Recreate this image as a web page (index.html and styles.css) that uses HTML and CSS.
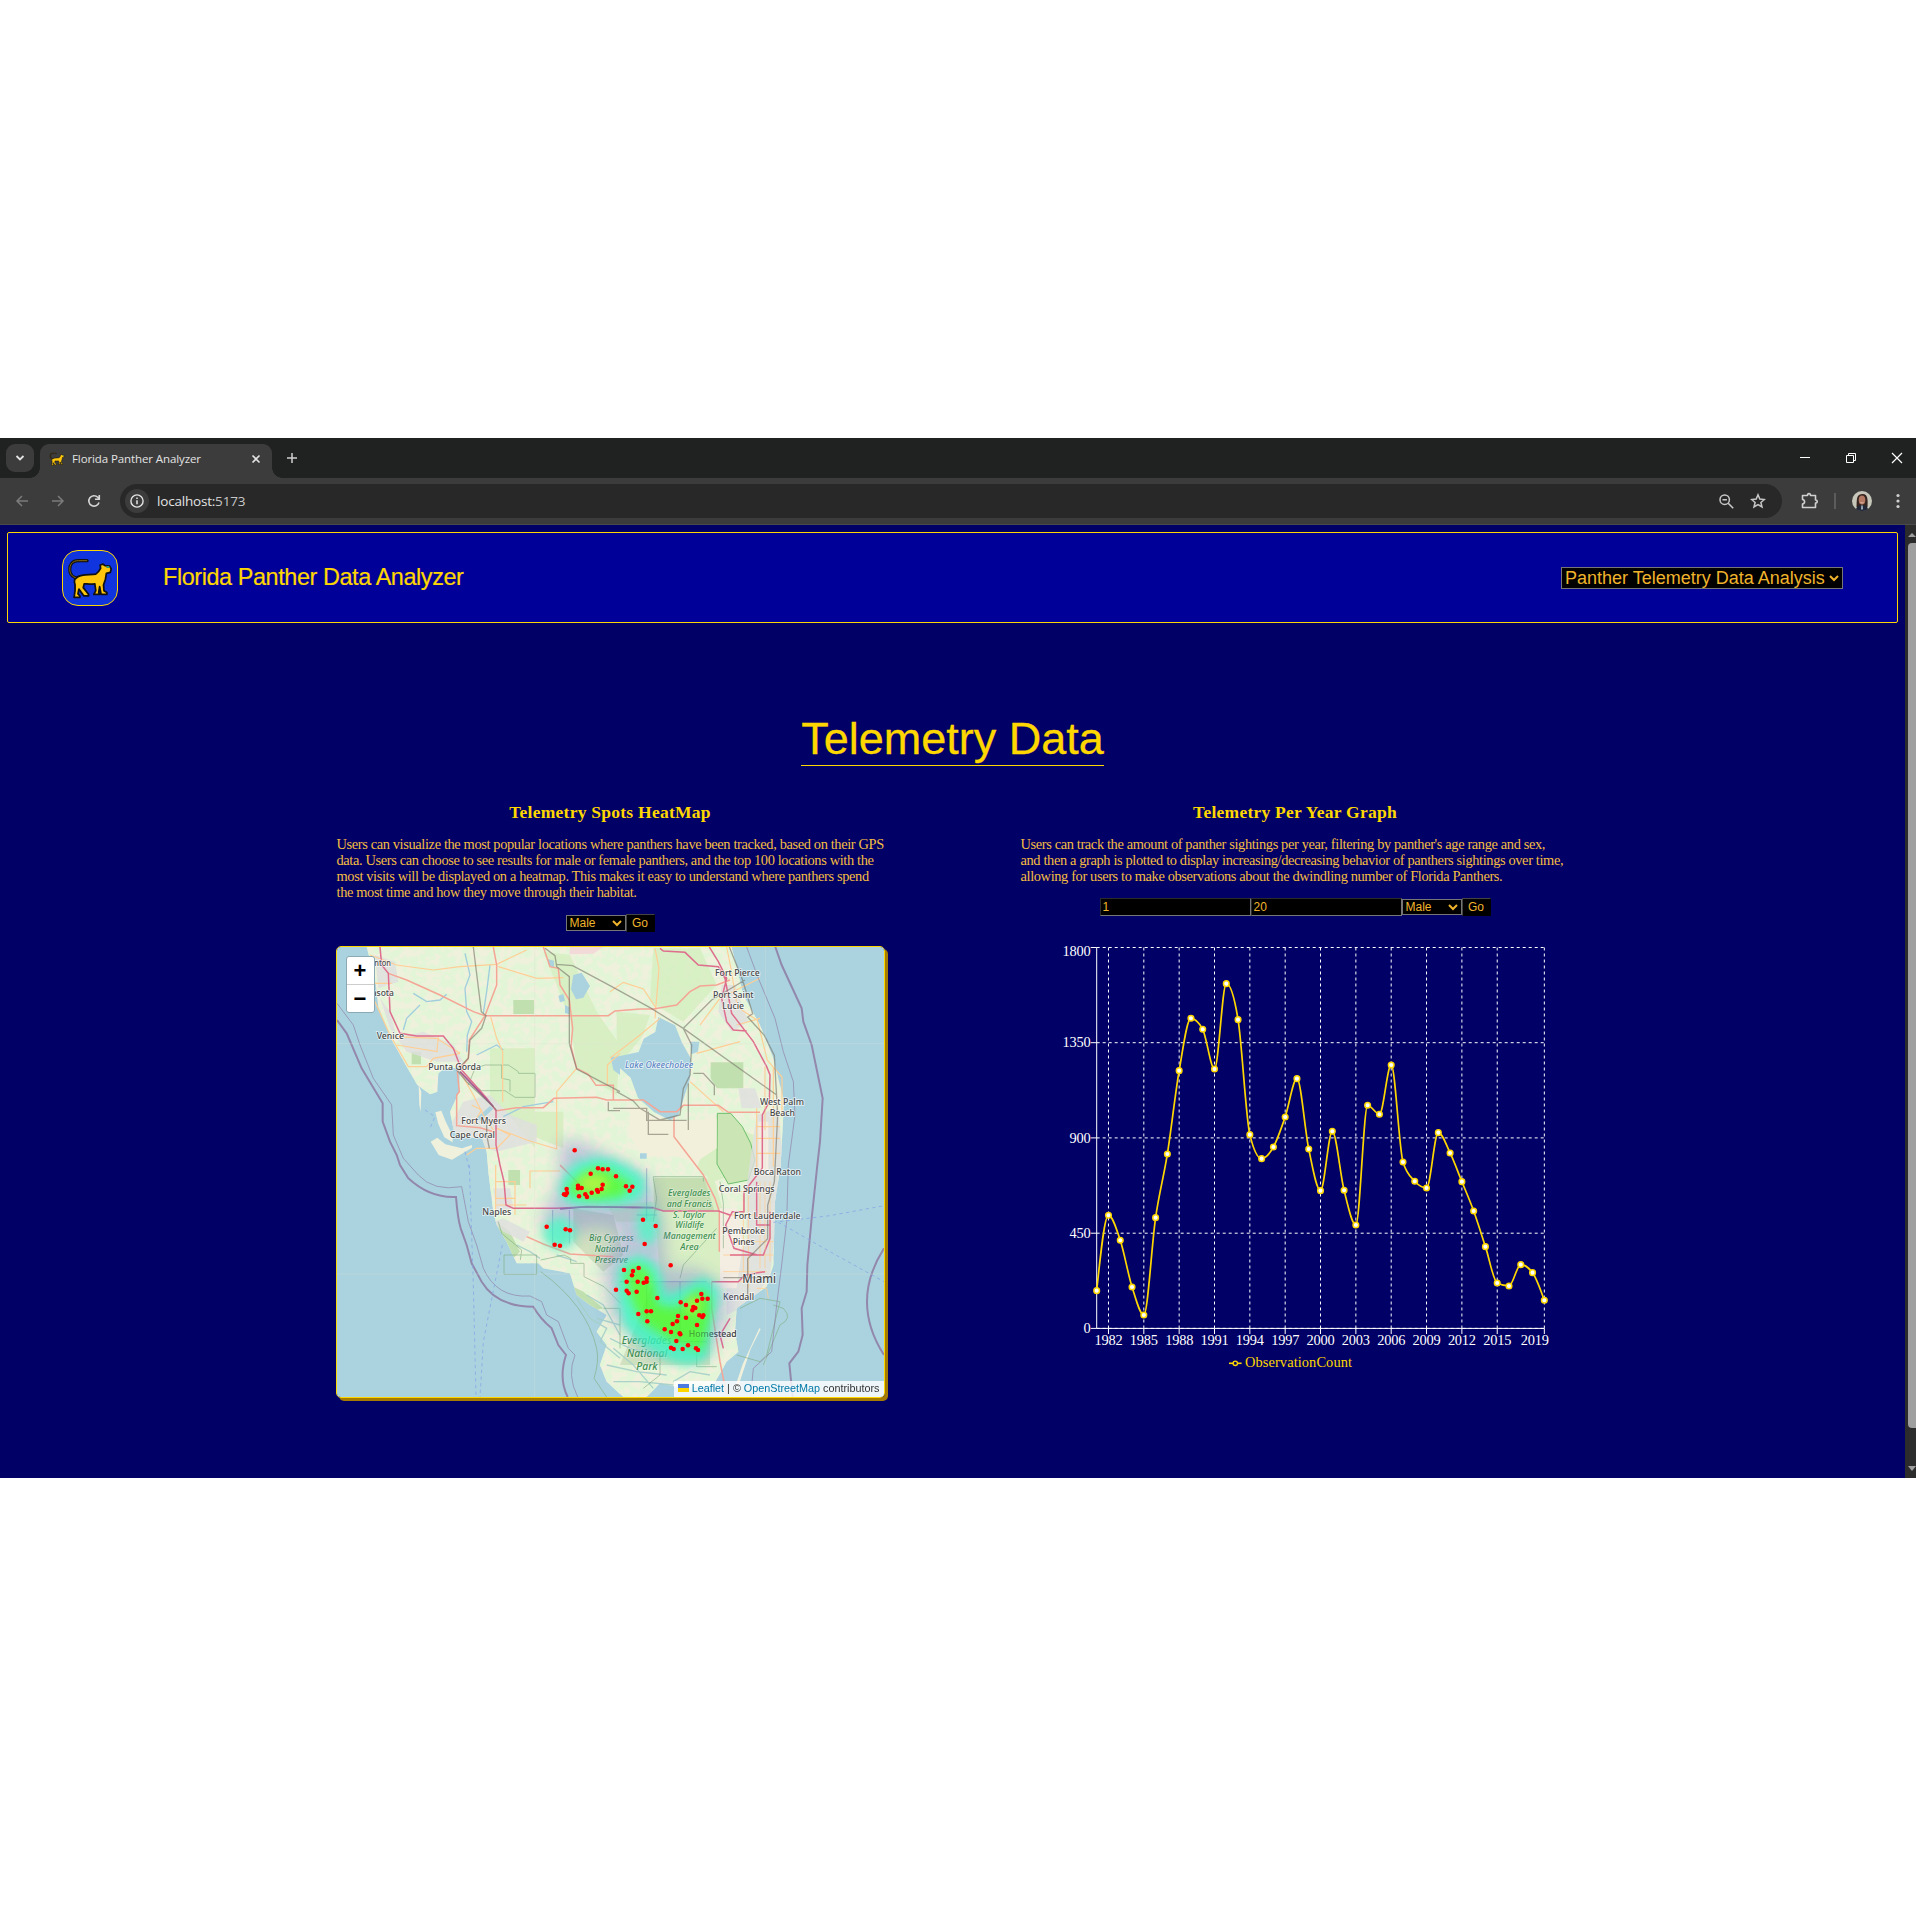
FILE: index.html
```html
<!DOCTYPE html>
<html lang="en">
<head>
<meta charset="utf-8">
<title>Florida Panther Analyzer</title>
<link rel="stylesheet" href="styles.css">
</head>
<body>
<svg class="defs" width="0" height="0">
  <symbol id="panther" viewBox="0 0 56 56">
    <path d="M25 10H16C9 10 7 15 7 19c0 6 4 9 9 9" fill="none" stroke="#111" stroke-width="3.200" stroke-linecap="round"/>
    <path d="M25 10H16C9 10 7 15 7 19c0 6 4 9 9 9" fill="none" stroke="#8a6b10" stroke-width="1"/>
    <path d="M15 27c4-3 13-2 19-3 3-2 4-4 5-6l-.5-3.500 3-.8 2 1.500 5 .5 1.500 3-1 3.500-4 1-1 6-2 6 .5 6 3 1.800v2h-6l-1.500-8-1 6 1 2h-6l2-4-1-7c-4 1-8 0-11 0l-1 4 4 5 1.500 2v1.500h-5l-5-7-1 5 2 2v1.500h-6l1-7 0-6c-1-3-1-6 1.500-7z" fill="#ffc60b" stroke="#111" stroke-width="1.800" stroke-linejoin="round"/>
    <path d="M45 16.500h3" stroke="#2b9a7a" stroke-width="2"/>
  </symbol>
  <symbol id="chevron" viewBox="0 0 10 8"><path d="M1 2l4 4 4-4" fill="none" stroke="currentColor" stroke-width="2"/></symbol>
</svg>

<div class="window">
  <div class="tabstrip">
    <div class="tab-search"><svg width="10" height="8"><path d="M1.500 2l3.500 3.500L8.500 2" fill="none" stroke="#e3e3e3" stroke-width="1.800"/></svg></div>
    <div class="tab">
      <svg class="favicon" width="18" height="18"><use href="#panther"/></svg>
      <span class="tab-title">Florida Panther Analyzer</span>
      <svg class="tab-close" width="10" height="10"><path d="M1.500 1.500l7 7M8.500 1.500l-7 7" stroke="#e3e3e3" stroke-width="1.600"/></svg>
    </div>
    <svg class="new-tab" width="12" height="12"><path d="M6 1v10M1 6h10" stroke="#d0d0d0" stroke-width="1.500"/></svg>
    <div class="caption">
      <svg width="12" height="12"><path d="M1 5.500h10" stroke="#fff"/></svg>
      <svg width="12" height="12"><path d="M1.500 3.500h7v7h-7zM3.500 3V1.500h7v7H9" fill="none" stroke="#fff"/></svg>
      <svg width="12" height="12"><path d="M1 1l10 10M11 1L1 11" stroke="#fff" stroke-width="1.200"/></svg>
    </div>
  </div>
  <div class="toolbar">
    <svg class="nav-icon" width="14" height="14"><path d="M13 7H2M7 2L2 7l5 5" fill="none" stroke="#7b7b7b" stroke-width="1.500"/></svg>
    <svg class="nav-icon" width="14" height="14"><path d="M1 7h11M7 2l5 5-5 5" fill="none" stroke="#7b7b7b" stroke-width="1.500"/></svg>
    <svg class="nav-icon" width="14" height="14"><path d="M12 8.500A5.200 5.200 0 1 1 10.800 3.300L12 4.500M12.300 1v4.200H8" fill="none" stroke="#d6d6d6" stroke-width="1.600"/></svg>
    <div class="omnibox">
      <div class="site-info"><svg width="14" height="14"><circle cx="7" cy="7" r="6.100" fill="none" stroke="#e3e3e3" stroke-width="1.400"/><path d="M7 6.200v4M7 3.600v1.500" stroke="#e3e3e3" stroke-width="1.500"/></svg></div>
      <span class="url"><span class="host">localhost:</span>5173</span>
      <svg class="find" width="15" height="15"><circle cx="5.700" cy="5.700" r="4.700" fill="none" stroke="#c7c7c7" stroke-width="1.500"/><path d="M3.500 5.700h4.400M9.200 9.200l5 5" stroke="#c7c7c7" stroke-width="1.600"/></svg>
      <svg class="star" width="16" height="16"><path d="M8 1.800l1.800 4.300 4.600.4-3.500 3 1.100 4.500-4-2.400-4 2.400 1.100-4.500-3.500-3 4.600-.4z" fill="none" stroke="#c7c7c7" stroke-width="1.500"/></svg>
    </div>
    <svg class="puzzle" width="18" height="18"><path d="M2.500 3.500H7.500C7.500 1 10.500 1 10.500 3.500H15.500V8C17.800 8 17.800 11 15.500 11V15.500H2.500V12C5.300 11.500 5.300 8 2.500 7.500z" fill="none" stroke="#d0d0d0" stroke-width="1.600" stroke-linejoin="round"/></svg>
    <i class="sep"></i>
    <svg class="avatar" width="20" height="20"><circle cx="10" cy="10" r="10" fill="#c6c6ba"/><path d="M4.500 16C5 9 4 3.500 10 3s6 6 5.500 13z" fill="#35241f"/><ellipse cx="10" cy="9" rx="3.300" ry="4.500" fill="#b57862"/><path d="M8.500 11.500q1.500 1 3 0" stroke="#e8d8d0" fill="none" stroke-width=".7"/><path d="M4 18c1-3 3-4 6-4s5 1 6 4c-3 2.700-9 2.700-12 0z" fill="#222838"/><path d="M9.200 14.500h1.600l.2 4h-2z" fill="#9ab"/></svg>
    <svg class="menu" width="4" height="16" fill="#d0d0d0"><circle cx="2" cy="2.500" r="1.600"/><circle cx="2" cy="8" r="1.600"/><circle cx="2" cy="13.500" r="1.600"/></svg>
  </div>

  <div class="viewport">
    <main class="page">
      <nav class="navbar">
        <div class="logo"><svg width="54" height="54"><use href="#panther"/></svg></div>
        <span class="brand">Florida Panther Data Analyzer</span>
        <div class="select select-nav"><span>Panther Telemetry Data Analysis</span><svg width="10" height="8"><use href="#chevron"/></svg></div>
      </nav>
      <h1>Telemetry Data</h1>
      <div class="columns">
        <section class="column">
          <h3>Telemetry Spots HeatMap</h3>
          <p>Users can visualize the most popular locations where panthers have been tracked, based on their GPS<br>data. Users can choose to see results for male or female panthers, and the top 100 locations with the<br>most visits will be displayed on a heatmap. This makes it easy to understand where panthers spend<br>the most time and how they move through their habitat.</p>
          <div class="controls">
            <div class="select"><span>Male</span><svg width="10" height="8"><use href="#chevron"/></svg></div>
            <button>Go</button>
          </div>
          <div class="map">
<svg class="tiles" viewBox="21 36 1641 1350">
  <defs>
    <filter id="mottle" x="0" y="0" width="100%" height="100%"><feTurbulence type="fractalNoise" baseFrequency=".045" numOctaves="4" seed="8"/><feColorMatrix values="0 0 0 0 .77  0 0 0 0 .91  0 0 0 0 .68  6 0 0 0 -2.300"/></filter>
    <filter id="b12" x="-50%" y="-50%" width="200%" height="200%"><feGaussianBlur stdDeviation="14"/></filter>
    <filter id="b20" x="-50%" y="-50%" width="200%" height="200%"><feGaussianBlur stdDeviation="24"/></filter>
    <clipPath id="land"><path id="coast" d="M110 36L135 130 145 215 185 315 232 398 262 450 300 478 322 470 325 415 345 398 390 400 388 470 360 530 372 590 400 610 455 605 470 650 475 710 490 830 500 870 530 920 560 985 625 985 640 1000 720 1015 740 1080 780 1110 830 1140 800 1190 830 1230 810 1290 830 1340 880 1386 950 1386 990 1345 1060 1360 1150 1350 1190 1280 1225 1250 1215 1190 1220 1120 1310 1055 1330 990 1335 800 1352 690 1362 500 1330 370 1290 270 1240 180 1205 36Z"/></clipPath>
  </defs>
  <rect x="21" y="36" width="1641" height="1350" fill="#aad3df"/>
  <use href="#coast" fill="#f0f1dc"/>
  <g clip-path="url(#land)">
    <rect x="100" y="36" width="1280" height="1350" filter="url(#mottle)"/>
    <g fill="#d3edbd" opacity=".75"><path d="M480 340H615V640L520 520 480 500ZM640 50L720 60 800 230 870 330 860 480 740 400 720 250ZM600 530H700V640L600 600ZM970 40H1110L1160 150 1060 260 960 200ZM860 230L960 240 940 300 860 400ZM1160 550L1270 600 1270 700 1150 740 1100 700ZM860 860H1180L1170 830 1150 740 970 730 970 800 830 810Z"/><path d="M1130 650L1180 830 1170 1040 990 1040 970 730H1150"/></g>
    <g fill="#b6dba5" opacity=".8"><path d="M550 195h62v42h-62zM245 350h28v38h-28zM535 705h35v45h-35zM1142 382h98v78h-80l-18-30zM700 1040l60 30 60 50-40 10-60-50zM500 860l40 30 30 60-20 20-30-40z"/></g>
    <path d="M1162 535h40l35 40 25 50 13 50-20 60-60 12-34-60z" fill="#cbe6b4" stroke="#6cbf6c" stroke-width="3"/>
    <path d="M973 728h150l30 100h-180z" fill="#bcd5aa" opacity=".7"/>
    <path d="M900 515h50l10 25 70 20 130-10v90l-60 40-60-15H940l-40-60z" fill="#f2f0da"/>
    <path d="M720 36h100l-30 20-72 2z" fill="#f2dad9"/>
    <g fill="#dedfde" opacity=".8"><path d="M135 60l60 20 10 60-60 20zM150 190l30 40 20 80-20-30zM200 310l80-20 90 40 30 50-80 0-90-30zM400 500l80-20 60 60 80 30 0 50-120 30-60-20-40 30-60-50zM490 760l50 0 10 60-50 10zM490 860l30-10 80 40-20 30-60-30zM1175 150l40 0 40 110-50 30-40-60zM1225 460l50 0 20 60-60 0zM1280 540l65-20 15 180-40 320-50 80-80 40 0-120 60-100 0-170z"/></g>
    <g fill="#f4ede2"><path d="M1170 820h50l20 100-20 140-50 0zM1285 560h30v160h-30z"/></g>
    <g fill="#c4d9b4" opacity=".7"><path d="M970 1040h170v250H870l40-100z"/><path d="M730 820l120 20 30 120-60 50-90-90z"/></g>
  </g>
  <g fill="#aad3df"><path d="M985 246l50 25 20 50 28 50-3 60-35 110-25 15-48-25-48-43-22-60-56-50 10-12 70-15 15-40 35-20z"/><path d="M730 120l25-7 25 40-20 35-22 5-15-30zM685 182l15-5 5 20-15 5zM652 72l20 5v20l-15-4zM705 210l15 8-3 20-12-4zM842 365l28 0v55l-20-15zM1080 320l28 0-4 30-20 8zM930 655h20v16h-20zM440 548l40-35 10 8-38 36z"/></g>
  <g fill="#f0f1dc"><path d="M316 532l18-5 14 35 20 40 0 20-25-15-18-40zM302 620l20-12 24 20 50 12 30-10 0 8-60 36-40-14zM266 450l8 20-2 60-4-20zM1288 1180l4 2-30 60-30 90-6 20-8-4 20-60z"/></g>
  <g fill="none" stroke="#a5cfc8" stroke-width="4" opacity=".9"><path d="M740 1090l40 60 50 30-20 40 60 50M800 1150l70 20M840 1210l60 30 80 20M830 1290l90 20 90 10M850 1340l80 0 100 10M1030 1340l50-30 60 10M770 1080l50 30 50 90M850 1240l60 50 60 70M560 930l40 20 30 20M680 960l60 20"/></g>
  <g fill="none" stroke="#9fcddd" stroke-width="4"><path d="M250 175L290 200 330 195 350 178M220 285L230 250 270 210M405 55L420 120 405 160 410 230 425 260 412 300 410 350M480 90L470 170 460 235M440 360L500 330 520 345M520 545l60-30 90-15"/></g>
  <g fill="none" stroke="#7eab7e" stroke-width="3" opacity=".6"><path d="M415 450l20-50 30-10h50v40l25 5v35M515 390h20l30 20v5h50v72h-60l-30-20h-70l-20-15M522 960h98v58h-98zM632 975l70-15 20 10 0 15h40v40l60 30 50 50M505 860l10 35 60 50-4 30M970 860l10-70-10-60v-5h150v15M1170 740l10 65v135M1050 1030l10-40 100-110M820 1120h50v120M1100 1230v65h60M990 1260v60l-50 40"/><path d="M632 1010Q770 1110 800 1240Q808 1280 792 1330L830 1386M1230 1120l60-30 60 10-40 160-20 20-70-20M1330 1110l30 10q30 30-10 50l-50 120"/></g>
  <g fill="none" stroke="#ffce94" stroke-width="3.500"><path d="M120 60L200 90 310 105 390 95 500 88 590 45M135 145h50M135 200L180 300 235 395 290 395 310 370 390 355M190 305l130 5 70 45M325 305l-4 45-120-20M482 245L500 310 518 350V500M505 95L620 130 700 128M832 450V390L870 355M390 410L430 480 460 540 500 600M425 510l30 15-25 40M500 580L590 615 680 642V470L740 400M500 580l40 20-40 40-60 0-30 20M495 740h60v100M495 790h60M500 810h90M497 690v150M600 760v-52h90M1110 270l60-80 120-60M975 40l12 60-12 150M840 170l40-28 60 20 40 60M840 370l90-70 60-50M1220 270l70-20M1190 36l12 60 20 120 60 40 30 120 44 50 0 120M1080 440l100 90M1280 520v180M1305 395v190M1330 395v300M1280 575h70M1280 610h70M1280 655h70M1100 355l130-35"/><path d="M1240 780v230M1255 780v280M1290 740v260M1320 740v240M1305 740v260M1220 770h110M1190 840h140M1200 920h130M1180 960h150M1180 1010h130M1190 1040h90M1280 1060l30 0 5 30" stroke-width="2.500"/></g>
  <g fill="none" stroke="#f5a595" stroke-width="4.500"><path d="M175 115L230 135 330 180 430 230 465 242H835L855 228 930 222H970L1040 210 1080 170 1110 153 1160 150 1200 135M490 36L500 90V150L465 242 418 315 415 370 382 412 388 470 380 480V572L450 578 490 590M500 527L560 518H640L672 490 800 487 830 495H940L990 530H1040L1060 511H1165L1195 532H1290M640 36L660 95 685 100 690 150 718 195 728 280 723 335 740 400 775 418 798 451H850V495M1032 545v60L1120 720 1155 790 1168 830V950M690 690l70 70M590 905l50 22 80 30 130 8M1145 1040v80l25 160 20 100"/></g>
  <g fill="none" stroke="#df6d8d" stroke-width="4.500"><path d="M150 36L155 90 175 115 180 230 210 295 260 303H340L370 340 395 405 470 490 498 527 498 630 510 690M510 690L522 740 528 810 550 820H680L770 815 850 817 970 818 1000 828 1165 828 1200 840M990 40L1000 48 1065 52 1105 90 1165 95 1185 130 1205 235 1270 320 1310 395 1320 420 1318 500 1297 540V700M1138 36L1165 80 1190 130 1175 190 1190 260 1210 285 1250 288M1297 700l-55 70 0 60-35 0-20 40 25 70 70 20M1280 740v130h40M1200 960h100l20-50v-80M1145 1040h80l20-20 60-10M1200 1150l-30 50 10 40"/></g>
  <path d="M390 410L490 515M690 822L770 815 970 818" fill="none" stroke="#a65a90" stroke-width="5"/>
  <g fill="none" stroke="#777368" stroke-width="4" opacity=".6"><path d="M430 36L454 230 468 242 455 280 420 315 415 370 380 405 410 440 495 520 500 527M645 40L675 62 680 95 718 125V325L740 402 870 470M680 88L728 92 840 152 960 218 1060 280 1340 480M1060 280l85-85 100-60M1060 280L1085 330 1080 420 1060 460 1050 540 990 555 930 520 910 498 860 470M835 500v27h35M850 520h100v36h80l40 0M955 530v68h60M1090 415h30l33 36v30M1075 445v140M1198 36l40 100 30 100-15 10 50 55 30 60 10 180-10 200-20 70v100l-60 60v120M470 560v40l8 40M1180 1028h130"/></g>
  <g fill="none" stroke="#6977ad" stroke-width="3" opacity=".5"><path d="M668 825v110M718 825v100M950 700v150M980 840h-60M870 1040h260M1050 1040v180l80 0M950 1040v120"/></g>
  <g fill="none" stroke="#8f7ba4" opacity=".85" stroke-width="6"><path d="M21 255L50 295 95 400 158 505 158 560 180 620 200 660 210 690 235 730Q300 790 378 786Q383 850 392 880L410 930 425 985 455 1040Q500 1115 610 1115 630 1150 665 1180L685 1230 708 1260Q685 1330 713 1386M1336 36L1355 90 1415 220 1420 260 1445 330 1478 490 1470 620 1462 690 1445 850 1432 990 1430 1070 1415 1120 1418 1200 1405 1250 1378 1285 1388 1386M1662 940Q1560 1100 1662 1260"/><path d="M21 205L70 270 90 330 130 430 185 510 190 600 220 670 265 720Q310 770 395 755L415 860 440 930 460 1000Q500 1090 600 1083L635 1100 650 1140 685 1160 715 1240 735 1260Q710 1320 743 1386M1250 36L1285 130 1335 250 1360 350 1390 440 1395 540 1375 690 1370 860 1355 990 1340 1110 1325 1250 1270 1300 1262 1386" stroke-width="3" opacity=".75"/></g>
  <path d="M418 690L430 1050 438 1386M517 930L460 1220 450 1386M285 525l30 20-15 35M405 650l15 60M1330 862L1500 842 1662 812M1345 862L1500 950 1662 1040" fill="none" stroke="#86a5e5" stroke-width="3" stroke-dasharray="10 10" opacity=".75"/>
  <path d="M21 326H1662M21 1017H1662M614 36V1386M1306 36V1386" stroke="#e0e0d8" stroke-width="2" opacity=".45"/>
  <g id="labels" class="map-labels"></g>
  <g class="heat">
    <path d="M690 620l60 0 100 50 110 60 40 130 10 140 90 0 90 60 0 100-60 110-160-10-130-120-20-160 50-90-90-10-90 40-60-60 60-120z" fill="#7076d8" opacity=".42" filter="url(#b20)"/>
    <g fill="#38f5c2" filter="url(#b12)" opacity=".95"><path d="M690 785Q690 680 790 668 860 660 940 725 965 805 870 810L730 812z"/><ellipse cx="688" cy="895" rx="48" ry="48" opacity=".9"/><ellipse cx="952" cy="870" rx="32" ry="60" opacity=".85"/><path d="M865 1000q70-80 125 10l20 70 110-55q70 30 35 100-15 60-20 140-60 50-150-5-75-40-105-95-25-80-15-155z"/></g>
    <g fill="#48fb28" filter="url(#b12)" opacity=".95"><path d="M710 775Q755 690 825 700L905 745 875 785 790 793z"/><path d="M888 1010q45-40 75 10l20 90 60 10 60-55q50 5 35 75l-20 105-90-25-85-55q-50-70-55-155z"/></g>
    <g fill="#b4f52a" filter="url(#b12)" opacity=".8"><ellipse cx="790" cy="745" rx="46" ry="28"/><ellipse cx="1090" cy="1110" rx="22" ry="28"/></g>
  </g>
  <g id="labels-over" class="map-labels" opacity=".35"></g>
  <g id="spots" fill="#f00"></g>
</svg>
            <div class="zoom"><span>+</span><span>−</span></div>
            <div class="attribution"><svg width="11" height="8"><path fill="#4c7be1" d="M0 0h11v4H0z"/><path fill="#ffd500" d="M0 4h11v4H0z"/></svg> <a>Leaflet</a> | © <a>OpenStreetMap</a> contributors</div>
          </div>
        </section>
        <section class="column">
          <h3>Telemetry Per Year Graph</h3>
          <p>Users can track the amount of panther sightings per year, filtering by panther's age range and sex,<br>and then a graph is plotted to display increasing/decreasing behavior of panthers sightings over time,<br>allowing for users to make observations about the dwindling number of Florida Panthers.</p>
          <div class="controls">
            <input value="1"><input value="20">
            <div class="select"><span>Male</span><svg width="10" height="8"><use href="#chevron"/></svg></div>
            <button>Go</button>
          </div>
          <svg id="chart" class="chart" width="549" height="450"></svg>
        </section>
      </div>
    </main>
    <div class="scrollbar">
      <svg width="11" height="18"><path d="M3 12l4-4 4 4z" fill="#9f9f9f"/></svg>
      <i class="thumb"></i>
      <svg class="down" width="11" height="50"><path d="M3 38h8l-4 5z" fill="#9f9f9f"/></svg>
    </div>
  </div>
</div>
<script src="app.js"></script>
</body>
</html>
```
FILE: styles.css
```css
* { box-sizing: border-box; }
body { margin: 0; padding-top: 438px; height: 1916px; background: #fff; overflow: hidden; }
svg { display: block; flex: none; }
.defs { position: absolute; }
.window { height: 1040px; display: flex; flex-direction: column; font-family: "Open Sans", "Noto Sans", sans-serif; }

.tabstrip { height: 40px; background: #202221; display: flex; padding: 6px 0 0 6px; }
.tab-search { width: 28px; height: 28px; border-radius: 9px; background: #3c3c3c; display: flex; align-items: center; justify-content: center; }
.tab { position: relative; width: 232px; height: 34px; margin-left: 6px; background: #3c3c3c; border-radius: 9px 9px 0 0; display: flex; align-items: center; padding: 0 11px 5px 8px; }
.tab::before, .tab::after { content: ""; position: absolute; bottom: 0; width: 10px; height: 10px; }
.tab::before { left: -10px; background: radial-gradient(circle at 0 0, transparent 9.5px, #3c3c3c 10px); }
.tab::after { right: -10px; background: radial-gradient(circle at 100% 0, transparent 9.5px, #3c3c3c 10px); }
.tab-title { margin-left: 6px; font-size: 11.5px; letter-spacing: -.1px; color: #e3e3e3; white-space: nowrap; }
.tab-close { margin-left: auto; }
.new-tab { margin: 8px 0 0 14px; }
.caption { margin-left: auto; display: flex; gap: 34px; padding: 8px 13px 0 0; }

.toolbar { height: 47px; background: #3c3c3c; border-bottom: 1px solid #4a4c4b; display: flex; align-items: center; padding: 0 16px 0 15px; }
.nav-icon { margin-right: 22px; }
.omnibox { width: 1662px; height: 34px; margin-left: -3px; border-radius: 17px; background: #282828; display: flex; align-items: center; padding: 0 16px 0 5px; }
.site-info { width: 24px; height: 24px; border-radius: 50%; background: #3c3c3c; display: flex; align-items: center; justify-content: center; }
.url { margin-left: 8px; font-size: 13.5px; letter-spacing: -.2px; color: #c7c7c7; }
.host { color: #e3e3e3; }
.find { margin-left: auto; }
.star { margin-left: 16px; }
.puzzle { margin-left: 18px; }
.sep { width: 2px; height: 16px; margin-left: 16px; background: #5c5c5c; }
.avatar { margin-left: 16px; }
.menu { margin-left: auto; }

.viewport { flex: 1; display: flex; }
.page { width: 1905px; background: #006; padding: 7px; display: flex; flex-direction: column; align-items: center; color: gold; }
.scrollbar { width: 11px; background: #2c2c2c; display: flex; flex-direction: column; align-items: flex-end; }
.thumb { width: 8px; flex: 1; border-radius: 4px 0 0 4px; background: #9f9f9f; }

.navbar { width: 1891px; height: 91px; border: 1px solid gold; border-radius: 2px; background: #009; display: flex; align-items: center; padding: 0 54px; }
.logo { width: 56px; height: 56px; border: 1px solid gold; border-radius: 16px; background: #1034dd; overflow: hidden; }
.brand { margin-left: 45px; padding-bottom: 2px; font: 23.4px/26px "Liberation Sans", Arial, sans-serif; letter-spacing: -.4px; -webkit-text-stroke: .2px; }
.select { width: 60px; height: 16px; border: 1px solid #767676; background: #000; color: #f0b42c; display: flex; align-items: center; justify-content: space-between; padding: 0 3px; font: 12px/14px "Liberation Sans", Arial, sans-serif; white-space: nowrap; }
.select-nav { width: 282px; height: 22px; margin-left: auto; font-size: 18px; line-height: 20px; }

h1 { margin: 90px 0 0; height: 53px; border-bottom: 1px solid gold; font: 45px/52px "Liberation Sans", Arial, sans-serif; white-space: nowrap; -webkit-text-stroke: .3px; }
.columns { margin-top: 36px; display: grid; grid-template-columns: 549px 549px; column-gap: 136px; }
.column { display: flex; flex-direction: column; font-family: "Liberation Serif", "Times New Roman", serif; }
h3 { margin: 0; font-size: 17.5px; line-height: 20px; letter-spacing: .25px; text-align: center; white-space: nowrap; }
p { margin: 14px 0 0; font-size: 14.4px; line-height: 16px; letter-spacing: -.365px; color: #f5bd42; white-space: nowrap; padding-left: 1px; }
.column + .column p { padding-left: 0; }
.controls { margin: 14px 0; height: 18px; display: flex; justify-content: center; align-items: center; }
.controls input { width: 151px; height: 18px; padding: 0 2px; border: 1px solid; border-color: #2b2b2b #767676 #767676 #2b2b2b; background: #000; color: #f0b42c; font: 12px/16px "Liberation Sans", Arial, sans-serif; }
.controls button { width: 29px; height: 18px; padding: 0; border: 1px solid; border-color: #444 #000 #000 #444; background: #000; color: #f0b42c; font: 12px/16px "Liberation Sans", Arial, sans-serif; }
.chart { display: block; font-size: 14.4px; }

.map { position: relative; width: 549px; height: 452px; border: 1px solid gold; border-radius: 5px; box-shadow: 3px 3px 0 #a67c00; overflow: hidden; }
.tiles { width: 547px; height: 450px; }
.map-labels { font-family: "Noto Sans", sans-serif; font-weight: 500; fill: #484848; stroke: #fff; stroke-opacity: .7; stroke-width: 5px; paint-order: stroke; }
.heat { opacity: .85; }
.zoom { position: absolute; left: 9px; top: 9px; width: 29px; height: 57px; border: 1px solid #8aa9b2; border-radius: 3px; background: #fff; }
.zoom span { display: block; height: 27px; font: bold 22px/28px "Liberation Sans", Arial, sans-serif; text-align: center; color: #000; }
.zoom span + span { border-top: 1px solid #ccc; height: 28px; }
.attribution { position: absolute; right: 0; bottom: 0; height: 16px; padding: 0 4px; background: rgba(255,255,255,.8); font: 10.8px/15px "Liberation Sans", Arial, sans-serif; color: #333; white-space: nowrap; }
.attribution svg { display: inline-block; }
.attribution a { color: #0078a8; }
```
FILE: app.js
```js
const NS = "http://www.w3.org/2000/svg";
function add(parent, tag, attrs, text) {
  const el = document.createElementNS(NS, tag);
  for (const k in attrs) el.setAttribute(k, attrs[k]);
  if (text !== undefined) el.textContent = text;
  parent.appendChild(el);
  return el;
}

// Line chart of observations per year
const chart = document.getElementById("chart");
const heights = [1081,855,930,1070,1154,862,671,421,264,297,416,160,268,613,685,650,560,445,656,781,603,780,884,525,552,404,695,753,773,607,668,754,842,949,1058,1067,1003,1027,1110];
const left = 75.7, step = 11.78, right = left + 38 * step;
const xs = heights.map((_, i) => left + i * step);
const ys = heights.map(v => v / 3 + .3);
const rows = [[17.5, 1800, 25.7], [112.7, 1350, 117], [207.9, 900, 213], [303.2, 450, 308], [398.4, 0, 403]];
rows.forEach(([y, label, ty]) => {
  add(chart, "line", { x1: left, x2: right, y1: y, y2: y, stroke: "#fff", "stroke-dasharray": "3 3" });
  add(chart, "line", { x1: left - 6, x2: left, y1: y, y2: y, stroke: "#fff" });
  add(chart, "text", { x: 69.5, y: ty, fill: "#fff", "text-anchor": "end", "letter-spacing": "-.2" }, label);
});
[1982,1985,1988,1991,1994,1997,2000,2003,2006,2009,2012,2015,2019].forEach(year => {
  const x = left + (year - 1981) * step;
  add(chart, "line", { x1: x, x2: x, y1: 17.5, y2: 398.4, stroke: "#fff", "stroke-dasharray": "3 3" });
  add(chart, "line", { x1: x, x2: x, y1: 398.4, y2: 404, stroke: "#fff" });
  add(chart, "text", { x: year === 2019 ? 513.7 : x, y: 414.5, fill: "#fff", "text-anchor": "middle", "letter-spacing": "-.2" }, year);
});
add(chart, "path", { d: `M${left} 17.5V398.4H${right}`, fill: "none", stroke: "#fff" });

// Monotone cubic interpolation between samples
const n = xs.length, slope = [], m = [];
for (let i = 0; i < n - 1; i++) slope.push((ys[i + 1] - ys[i]) / step);
for (let i = 1; i < n - 1; i++) {
  const a = slope[i - 1], b = slope[i];
  m[i] = (Math.sign(a) + Math.sign(b)) * Math.min(Math.abs(a), Math.abs(b), Math.abs(a + b) / 4) || 0;
}
m[0] = (3 * slope[0] - m[1]) / 2;
m[n - 1] = (3 * slope[n - 2] - m[n - 2]) / 2;
let d = `M${xs[0]} ${ys[0]}`;
for (let i = 0; i < n - 1; i++) {
  const h = step / 3;
  d += `C${xs[i] + h} ${ys[i] + h * m[i]} ${xs[i + 1] - h} ${ys[i + 1] - h * m[i + 1]} ${xs[i + 1]} ${ys[i + 1]}`;
}
add(chart, "path", { d, fill: "none", stroke: "gold", "stroke-width": 1.7 });
xs.forEach((x, i) => add(chart, "circle", { cx: x, cy: ys[i], r: 2.8, fill: "#fff", stroke: "gold", "stroke-width": 1.5 }));
add(chart, "path", { d: "M208 433.300h12.600", stroke: "gold", "stroke-width": 1.6 });
add(chart, "circle", { cx: 214.3, cy: 433.3, r: 2.2, fill: "#006", stroke: "gold", "stroke-width": 1.4 });
add(chart, "text", { x: 224, y: 437, fill: "gold", textLength: 107 }, "ObservationCount");

// Telemetry spots on the map
const spots = [[734,646],[804,700],[818,703],[834,703],[782,716],[858,724],[744,752],[744,760],[755,759],[710,762],[711,774],[702,778],[707,780],[747,784],[766,778],[771,786],[785,773],[801,765],[804,770],[815,762],[818,749],[650,875],[707,883],[720,886],[674,929],[690,932],[858,1064],
[888,754],[907,755],[899,767],[939,854],[977,873],[944,927],[1022,991],[882,1005],[909,1008],[926,999],[906,1021],[890,1040],[923,1040],[941,1043],[950,1030],[950,1040],[890,1067],[896,1075],[920,1070],[982,1089],[925,1137],[950,1129],[963,1129],[952,1159],[1052,1102],[1068,1110],[1101,1097],[1117,1091],[1133,1091],[1114,1077],[1090,1116],[1096,1119],[1087,1126],[1044,1143],[1041,1159],[1028,1167],[1068,1148],[1108,1141],[1120,1141],[1117,1146],[1101,1170],[1004,1183],[1023,1191],[1049,1195],[1051,1198],[1039,1218],[1023,1238],[1031,1242],[1058,1242],[1074,1231],[1098,1240],[1104,1245]];
const spotLayer = document.getElementById("spots");
spots.forEach(([cx, cy]) => add(spotLayer, "circle", { cx, cy, r: 6.8 }));

// Place names: text, left edge, baseline, width, size, style
const green = { fill: "#3f9050", "font-style": "italic", "stroke-opacity": 0.35 };
const labels = [
  ["nton",133,94,50,27],["asota",125,184,67,27],["Venice",140,313,82,27],["Punta Gorda",295,406,158,27],
  ["Fort Myers",394,568,134,27],["Cape Coral",359,610,136,27],["Naples",457,841,87,27],
  ["Fort Pierce",1155,122,134,27],["Port Saint",1149,190,122,27],["Lucie",1177,223,65,27],
  ["Lake Okeechobee",885,400,205,25,{ fill: "#5f87c4", "font-style": "italic" }],
  ["West Palm",1290,509,132,27],["Beach",1319,542,76,27],["Boca Raton",1271,721,142,27],
  ["Coral Springs",1166,770,168,27],["Fort Lauderdale",1212,852,200,27],["Pembroke",1177,898,128,27],["Pines",1208,931,66,27],
  ["Miami",1237,1045,101,35],["Kendall",1179,1094,93,27],["Homestead",1076,1207,144,27],
  ["Everglades",1014,783,127,25,green],["and Francis",1010,815,136,25,green],["S. Taylor",1029,848,97,25,green],
  ["Wildlife",1036,880,86,25,green],["Management",1000,912,157,25,green],["Area",1051,944,55,25,green],
  ["Big Cypress",777,919,134,25,green],["National",794,952,100,25,green],["Preserve",794,984,100,25,green],
  ["Everglades",875,1226,150,31,green],["National",890,1265,122,31,green],["Park",919,1304,64,31,green]
];
const labelLayer = document.getElementById("labels");
const overHeat = document.getElementById("labels-over");
labels.forEach(([text, x, y, w, size, extra]) => {
  const attrs = { x, y, textLength: w, lengthAdjust: "spacingAndGlyphs", "font-size": size, ...extra };
  add(labelLayer, "text", attrs, text);
  if (text === "Homestead") add(overHeat, "text", { ...attrs, "stroke-opacity": 0 }, text);
});
```
